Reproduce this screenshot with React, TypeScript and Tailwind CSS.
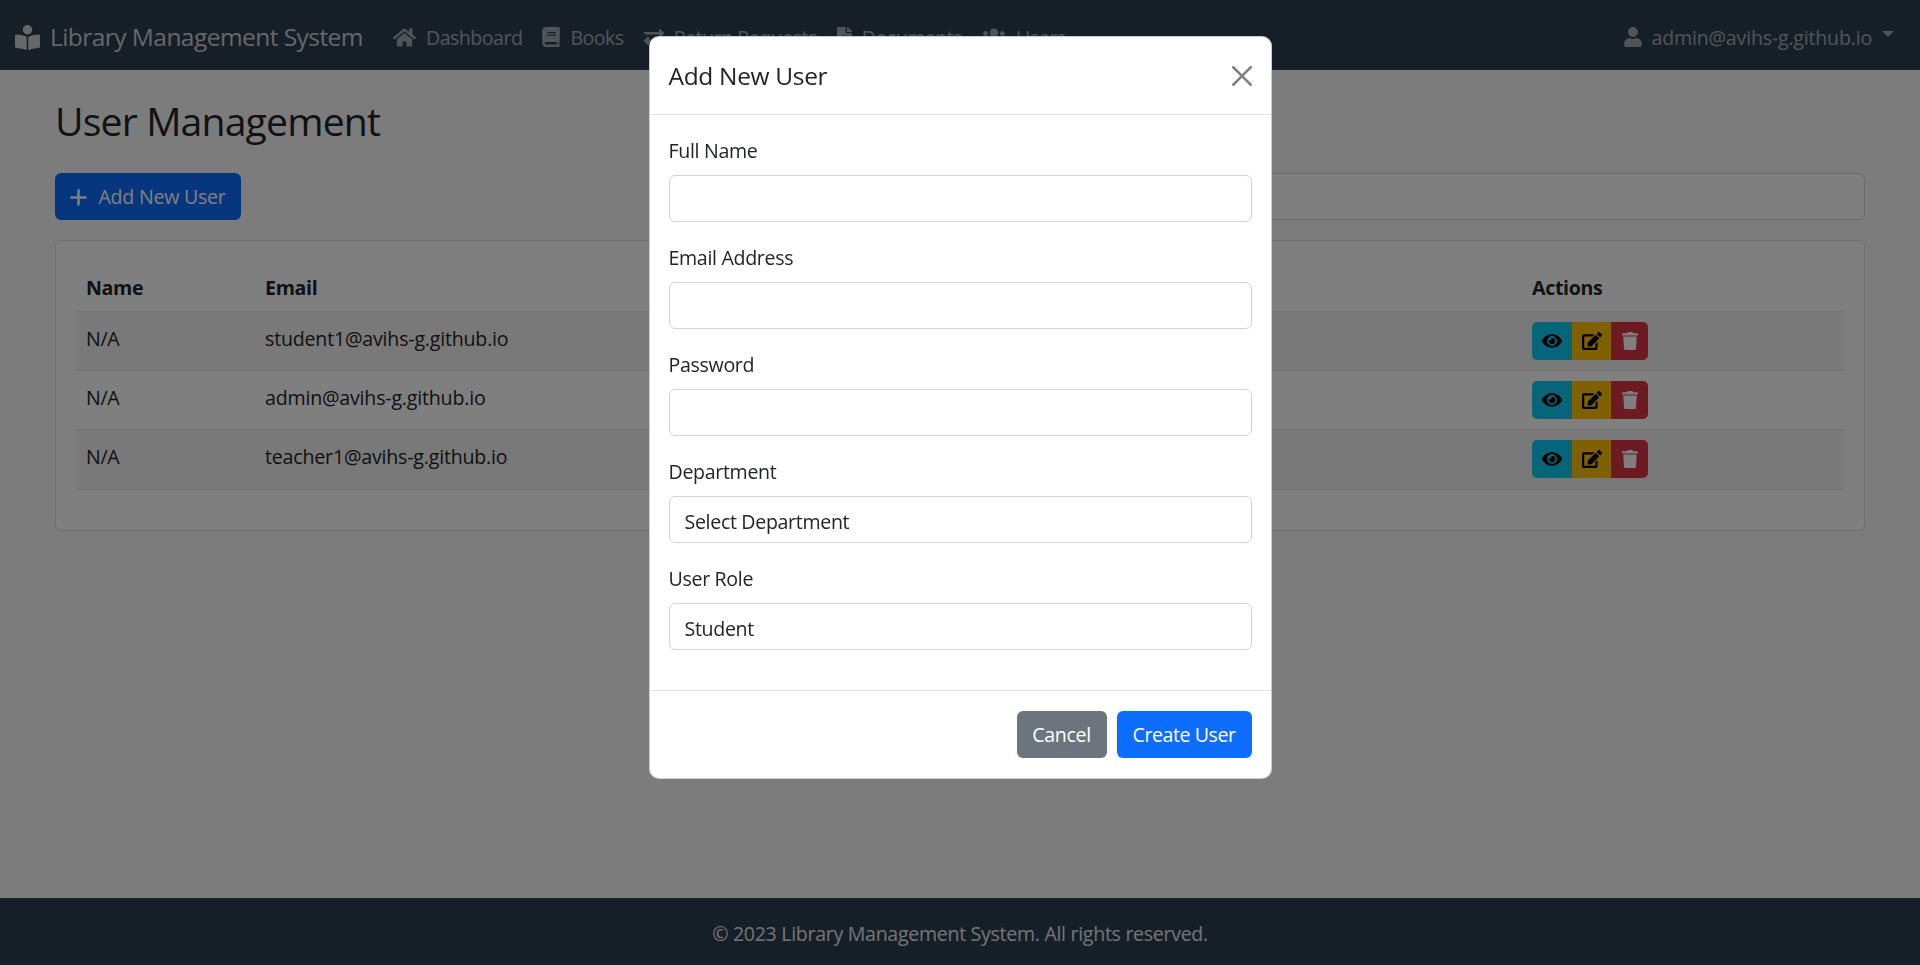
import { FaBookReader, FaHome, FaBook, FaExchangeAlt, FaFileAlt, FaUsers, FaUser, FaEye, FaEdit, FaTrash } from "react-icons/fa";

const users = [
  { name: "N/A", email: "student1@avihs-g.github.io" },
  { name: "N/A", email: "admin@avihs-g.github.io" },
  { name: "N/A", email: "teacher1@avihs-g.github.io" },
];

const navLinks = [
  { label: "Dashboard", icon: <FaHome className="w-[23px] h-[21px]" /> },
  { label: "Books", icon: <FaBook className="w-[18px] h-[20px]" /> },
  { label: "Return Requests", icon: <FaExchangeAlt className="w-[20px] h-[20px]" /> },
  { label: "Documents", icon: <FaFileAlt className="w-[15px] h-[20px]" /> },
  { label: "Users", icon: <FaUsers className="w-[24px] h-[20px]" /> },
];

function Field({ label, children }: { label: string; children: React.ReactNode }) {
  return (
    <div>
      <label className="block mb-[9.8px] leading-[29.4px]">{label}</label>
      {children}
    </div>
  );
}

const controlClass = "block w-full h-[47px] px-[15px] bg-white border border-[#ced4da] rounded-[6px] text-[#212529] appearance-none";

export default function App() {
  return (
    <div className="min-h-screen flex flex-col bg-[#f8f9fa] text-[#212529] text-[19.6px] font-['Open_Sans',sans-serif] tracking-[-0.33px]">
      {/* Navbar */}
      <nav className="h-[70px] bg-[#2c3e50] flex items-center pl-[15px] pr-[26px] pt-[5px] text-white/55">
        <div className="flex items-center gap-[10px] text-[24.5px] tracking-[-0.55px] text-white/75 mr-[20px]">
          <FaBookReader className="w-[25px] h-[25px]" />
          <span>Library Management System</span>
        </div>
        <div className="flex items-center tracking-[-0.52px]">
          {navLinks.map(link => (
            <div key={link.label} className="flex items-center gap-[10px] px-[10px]">
              {link.icon}
              <span>{link.label}</span>
            </div>
          ))}
        </div>
        <div className="ml-auto flex items-center gap-[10px] tracking-[-0.2px]">
          <FaUser className="w-[18px] h-[20px]" />
          <span>admin@avihs-g.github.io</span>
          <span className="mb-[6px] w-0 h-0 border-t-[6px] border-x-[6px] border-x-transparent border-t-white/55" />
        </div>
      </nav>

      {/* Page */}
      <main className="flex-1 pt-[24px] px-[55px]">
        <h2 className="text-[39.2px] tracking-[-0.85px] leading-[54px] mb-[25px]">User Management</h2>
        <div className="flex justify-between mb-[20px]">
          <button className="h-[47px] w-[186px] pt-[1px] flex items-center justify-center gap-[11px] bg-[#0d6efd] text-white rounded-[6px] tracking-[-0.25px]">
            <svg viewBox="0 0 16 16" className="w-[17px] h-[17px]" stroke="currentColor" strokeWidth="2.4" fill="none">
              <path d="M8 .5v15M.5 8h15" />
            </svg>
            Add New User
          </button>
          <input className="w-1/2 h-[47px] bg-white border border-[#ced4da] rounded-[6px]" />
        </div>
        <div className="bg-white border border-black/12 rounded-[6px] p-[20px]">
          <table className="w-full mb-[20px] border-collapse table-fixed">
            <thead>
              <tr className="border-b border-[#dee2e6] h-[50px] text-left">
                <th className="w-[179px] px-[10px] pt-[4px] font-bold">Name</th>
                <th className="px-[10px] pt-[4px] font-bold">Email</th>
                <th className="w-[322px] px-[10px] pt-[4px] font-bold">Actions</th>
              </tr>
            </thead>
            <tbody>
              {users.map((u, i) => (
                <tr key={u.email} className={`border-b border-[#dee2e6] h-[59.4px] ${i % 2 === 0 ? "bg-black/5" : ""}`}>
                  <td className="px-[10px] pb-[5px]">{u.name}</td>
                  <td className="px-[10px] pb-[5px] tracking-[-0.2px]">{u.email}</td>
                  <td className="px-[10px]">
                    <div className="flex h-[38px] w-[116px] rounded-[5px] overflow-hidden text-[17px]">
                      <button className="w-[40px] flex items-center justify-center bg-[#0dcaf0] text-black"><FaEye className="w-[20px] h-[18px]" /></button>
                      <button className="w-[39px] flex items-center justify-center bg-[#ffc107] text-black"><FaEdit className="w-[20px] h-[18px]" /></button>
                      <button className="w-[37px] flex items-center justify-center bg-[#dc3545] text-white"><FaTrash className="w-[16px] h-[18px]" /></button>
                    </div>
                  </td>
                </tr>
              ))}
            </tbody>
          </table>
        </div>
      </main>

      {/* Footer */}
      <footer className="h-[67px] pt-[4px] bg-[#2c3e50] flex items-center justify-center text-[#e6e9ea] tracking-[-0.31px]">
        © 2023 Library Management System. All rights reserved.
      </footer>

      {/* Modal */}
      <div className="fixed inset-0 bg-black/50" />
      <div className="fixed inset-0 flex justify-center items-start pt-[36px]">
        <div className="w-[623px] bg-white rounded-[10px] border border-black/20">
          <div className="h-[78px] flex items-center justify-between px-[19px] border-b border-[#dee2e6]">
            <h5 className="text-[24.5px] pt-[2px]">Add New User</h5>
            <svg viewBox="0 0 16 16" className="w-[20px] h-[20px] text-black/50" fill="currentColor">
              <path d="M.293.293a1 1 0 0 1 1.414 0L8 6.586 14.293.293a1 1 0 1 1 1.414 1.414L9.414 8l6.293 6.293a1 1 0 0 1-1.414 1.414L8 9.414l-6.293 6.293a1 1 0 0 1-1.414-1.414L6.586 8 .293 1.707a1 1 0 0 1 0-1.414z" />
            </svg>
          </div>
          <div className="px-[19px] pt-[21px] pb-[40px] flex flex-col gap-[20.8px] border-b border-[#dee2e6]">
            <Field label="Full Name"><input type="text" className={controlClass} /></Field>
            <Field label="Email Address"><input type="email" className={controlClass} /></Field>
            <Field label="Password"><input type="password" className={controlClass} /></Field>
            <Field label="Department">
              <select className={`${controlClass} pt-[3px]`}><option>Select Department</option></select>
            </Field>
            <Field label="User Role">
              <select className={`${controlClass} pt-[3px]`}><option>Student</option></select>
            </Field>
          </div>
          <div className="h-[87px] flex items-center justify-end gap-[10px] px-[19px]">
            <button className="h-[47px] w-[90px] bg-[#6c757d] text-white rounded-[6px]">Cancel</button>
            <button className="h-[47px] w-[135px] bg-[#0d6efd] text-white rounded-[6px] tracking-[-0.45px]">Create User</button>
          </div>
        </div>
      </div>
    </div>
  );
}
